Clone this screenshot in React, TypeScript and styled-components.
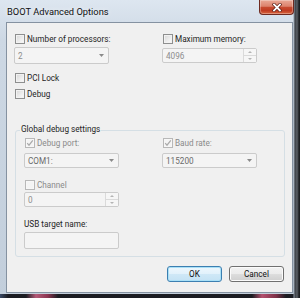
import React from 'react';
import styled, { createGlobalStyle } from 'styled-components';

const GlobalStyle = createGlobalStyle`
  html, body { margin: 0; padding: 0; background: #1b1d21; }
  body { font-family: Roboto, "Open Sans", sans-serif; }
  #root { width: 300px; height: 298px; }
`;

const Window = styled.div`
  width: 300px;
  height: 298px;
  box-sizing: border-box;
  display: flex;
  flex-direction: column;
  background-image:
    linear-gradient(to right, transparent 293px, #8f9aa6 294px, #3c4046 295px, #5b6066 297px, #1c1e21 299px),
    linear-gradient(to right, #3a4a66 0px, #1b1c22 8px, #1b1c22 26px, #b45a78 36px, #8a3550 48px, #1b1c22 58px, #1b1c22 252px, #b4506e 262px, #7e3148 276px, #1b1c22 286px),
    linear-gradient(to bottom, #dde6f0 0px, #cdd8e4 40px, #c2cedb 100%);
  background-size: 100% 100%, 100% 4px, 100% 100%;
  background-position: 0 0, 0 100%, 0 0;
  background-repeat: no-repeat;
`;

const TitleBar = styled.div`
  height: 22px;
  flex: none;
  display: flex;
  align-items: flex-start;
  justify-content: space-between;
  padding: 0 6px 0 7px;
`;

const Title = styled.div`
  font-size: 9.3px;
  line-height: 23px;
  color: #101010;
  white-space: nowrap;
  text-shadow: 0 0 5px rgba(255, 255, 255, 0.9);
`;

const CloseButton = styled.div`
  width: 35px;
  height: 15px;
  box-sizing: border-box;
  border: 1px solid #6e2a20;
  border-top: none;
  border-radius: 0 0 4px 4px;
  background: linear-gradient(to bottom, #eaa996 0%, #dc826c 45%, #c74a2f 52%, #c03c22 75%, #d9673f 100%);
  box-shadow: inset 0 0 0 1px rgba(255, 255, 255, 0.3);
  display: flex;
  align-items: center;
  justify-content: center;
`;

const FrameBody = styled.div`
  flex: 1;
  min-height: 0;
  display: flex;
  padding: 0 7px 5px 6px;
`;

const Client = styled.div`
  flex: 1;
  min-width: 0;
  background: #f0f0f0;
  border: 1px solid #8592a1;
  display: flex;
  flex-direction: column;
  padding-top: 10px;
  font-size: 8.2px;
  color: #1e1e1e;
`;

const TopSection = styled.div`
  display: flex;
  padding-left: 7px;
`;

const Column = styled.div<{ $width?: number }>`
  display: flex;
  flex-direction: column;
  width: ${(p) => (p.$width ? `${p.$width}px` : 'auto')};
  flex: ${(p) => (p.$width ? 'none' : '1')};
`;

const CheckRow = styled.label<{ $top?: number; $muted?: boolean }>`
  display: flex;
  align-items: center;
  gap: 2px;
  height: 12px;
  margin-top: ${(p) => p.$top ?? 0}px;
  color: ${(p) => (p.$muted ? '#8a8a8a' : '#1e1e1e')};
  white-space: nowrap;
`;

const Box = styled.span<{ $disabled?: boolean }>`
  width: 10px;
  height: 10px;
  box-sizing: border-box;
  margin-left: 1px;
  flex: none;
  border: 1px solid ${(p) => (p.$disabled ? '#b8b8b8' : '#8e8f8f')};
  background: ${(p) =>
    p.$disabled
      ? '#f4f4f4'
      : 'linear-gradient(135deg, #d6d6d6 0%, #eeeeee 60%, #fbfbfb 100%)'};
  box-shadow: inset 0 0 0 1px ${(p) => (p.$disabled ? '#f7f7f7' : '#f2f2f2')};
  display: flex;
  align-items: center;
  justify-content: center;
`;

const Field = styled.div<{ $top?: number; $height?: number; $width?: number; $dark?: boolean }>`
  width: ${(p) => p.$width ?? 95}px;
  height: ${(p) => p.$height ?? 16}px;
  margin-top: ${(p) => p.$top ?? 0}px;
  box-sizing: border-box;
  border: 1px solid #cbcbcb;
  border-radius: 2px;
  background: #f4f4f4;
  color: ${(p) => (p.$dark ? '#6a6a6a' : '#8d8d8d')};
  display: flex;
  align-items: center;
  padding-left: 3px;
`;

const FieldText = styled.span`
  flex: 1;
`;

const Arrow = styled.span`
  width: 13px;
  display: flex;
  justify-content: center;
`;

const SpinButtons = styled.div`
  width: 12px;
  height: 100%;
  display: flex;
  flex-direction: column;
  border-left: 1px solid #dadada;
`;

const SpinHalf = styled.div<{ $last?: boolean }>`
  flex: 1;
  display: flex;
  align-items: center;
  justify-content: center;
  border-top: ${(p) => (p.$last ? '1px solid #dadada' : 'none')};
  background: #f6f6f6;
`;

const Group = styled.fieldset`
  margin: 23px 7px 0 8px;
  padding: 0 8px 7px 8px;
  border: 1px solid #d5dfe5;
  border-radius: 3px;
  display: flex;
  min-width: 0;
`;

const Legend = styled.legend`
  padding: 0 1px 2px 1px;
  margin-left: -4px;
  line-height: 12px;
  color: #1e1e1e;
`;

const Label = styled.div<{ $top?: number }>`
  height: 12px;
  line-height: 12px;
  margin-top: ${(p) => p.$top ?? 0}px;
  white-space: nowrap;
`;

const ButtonRow = styled.div`
  display: flex;
  justify-content: flex-end;
  gap: 7px;
  margin-top: 9px;
  padding-right: 8px;
`;

const Button = styled.button<{ $default?: boolean }>`
  width: 55px;
  height: 16px;
  box-sizing: border-box;
  padding: 0;
  font-family: inherit;
  font-size: 8.2px;
  color: #111;
  border-radius: 3px;
  border: 1px solid ${(p) => (p.$default ? '#3c7fb1' : '#707070')};
  background: ${(p) =>
    p.$default
      ? 'linear-gradient(to bottom, #eef7fd 0%, #e1f1fb 50%, #cfe8f7 51%, #c4e2f4 100%)'
      : 'linear-gradient(to bottom, #f2f2f2 0%, #ebebeb 50%, #dddddd 51%, #cfcfcf 100%)'};
  box-shadow: inset 0 0 0 1px ${(p) => (p.$default ? '#a9e0f7' : '#fbfbfb')};
`;

const Check = () => (
  <svg width="8" height="8" viewBox="0 0 8 8">
    <path d="M1.2 4.2 L3 6.2 L6.8 1.4" fill="none" stroke="#a9a9a9" strokeWidth="1.2" />
  </svg>
);

const Down = ({ color = '#8a8a8a' }: { color?: string }) => (
  <svg width="5" height="3" viewBox="0 0 5 3">
    <path d="M0 0 H5 L2.5 3 Z" fill={color} />
  </svg>
);

const Up = () => (
  <svg width="4" height="2" viewBox="0 0 4 2">
    <path d="M0 2 H4 L2 0 Z" fill="#b4b4b4" />
  </svg>
);

const DownSmall = () => (
  <svg width="4" height="2" viewBox="0 0 4 2">
    <path d="M0 0 H4 L2 2 Z" fill="#b4b4b4" />
  </svg>
);

const Combo = ({ value, top, height, dark }: { value: string; top?: number; height?: number; dark?: boolean }) => (
  <Field $top={top} $height={height} $dark={dark}>
    <FieldText>{value}</FieldText>
    <Arrow>
      <Down />
    </Arrow>
  </Field>
);

const Spin = ({ value, top }: { value: string; top?: number }) => (
  <Field $top={top} $height={15}>
    <FieldText>{value}</FieldText>
    <SpinButtons>
      <SpinHalf>
        <Up />
      </SpinHalf>
      <SpinHalf $last>
        <DownSmall />
      </SpinHalf>
    </SpinButtons>
  </Field>
);

export default function App() {
  return (
    <>
      <GlobalStyle />
      <Window>
        <TitleBar>
          <Title>BOOT Advanced Options</Title>
          <CloseButton>
            <svg width="10" height="9" viewBox="0 0 10 9">
              <path d="M2 1.5 L8 7.5 M8 1.5 L2 7.5" stroke="#5a1d14" strokeWidth="3.2" strokeLinecap="square" />
              <path d="M2 1.5 L8 7.5 M8 1.5 L2 7.5" stroke="#ffffff" strokeWidth="1.8" strokeLinecap="square" />
            </svg>
          </CloseButton>
        </TitleBar>
        <FrameBody>
          <Client>
            <TopSection>
              <Column $width={148}>
                <CheckRow>
                  <Box />
                  Number of processors:
                </CheckRow>
                <Combo value="2" top={2} height={17} />
                <CheckRow $top={8}>
                  <Box />
                  PCI Lock
                </CheckRow>
                <CheckRow $top={4}>
                  <Box />
                  Debug
                </CheckRow>
              </Column>
              <Column>
                <CheckRow>
                  <Box />
                  Maximum memory:
                </CheckRow>
                <Spin value="4096" top={3} />
              </Column>
            </TopSection>
            <Group>
              <Legend>Global debug settings</Legend>
              <Column $width={138}>
                <CheckRow $muted>
                  <Box $disabled>
                    <Check />
                  </Box>
                  Debug port:
                </CheckRow>
                <Combo value="COM1:" top={4} height={15} dark />
                <CheckRow $top={11} $muted>
                  <Box $disabled />
                  Channel
                </CheckRow>
                <Spin value="0" top={1} />
                <Label $top={11}>USB target name:</Label>
                <Field $top={2} $height={17} />
              </Column>
              <Column>
                <CheckRow $muted>
                  <Box $disabled>
                    <Check />
                  </Box>
                  Baud rate:
                </CheckRow>
                <Combo value="115200" top={4} height={15} dark />
              </Column>
            </Group>
            <ButtonRow>
              <Button $default>OK</Button>
              <Button>Cancel</Button>
            </ButtonRow>
          </Client>
        </FrameBody>
      </Window>
    </>
  );
}
